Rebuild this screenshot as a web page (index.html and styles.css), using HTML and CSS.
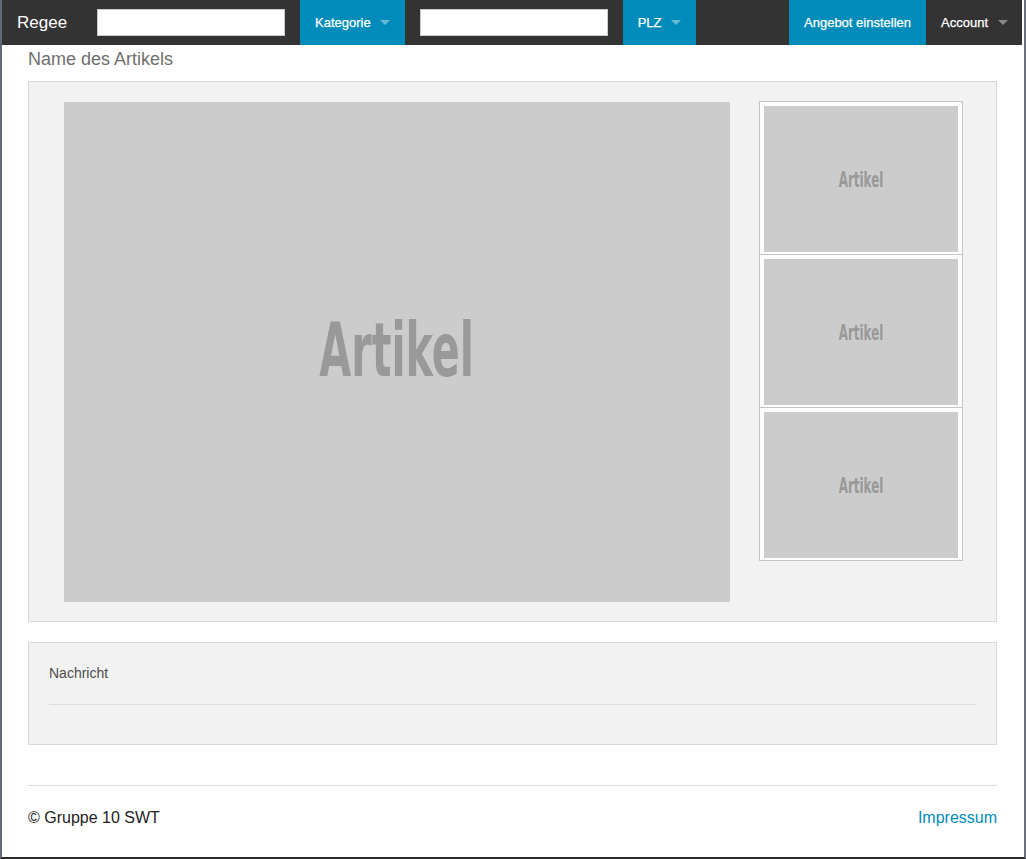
FILE: index.html
```html
<!DOCTYPE html>
<html lang="de">
<head>
<meta charset="utf-8">
<title>Regee</title>
<link rel="stylesheet" href="styles.css">
</head>
<body>
<div class="frame">
  <header class="topbar">
    <div class="brand">Regee</div>
    <input class="search" type="text">
    <a class="nav-btn blue dropdown">Kategorie</a>
    <input class="search" type="text">
    <a class="nav-btn blue dropdown">PLZ</a>
    <div class="spacer"></div>
    <a class="nav-btn blue">Angebot einstellen</a>
    <a class="nav-btn dropdown gray-arrow">Account</a>
  </header>
  <main class="content">
    <h1 class="title">Name des Artikels</h1>
    <section class="panel gallery">
      <div class="main-img"><span class="ph ph-big">Artikel</span></div>
      <div class="thumbs">
        <div class="thumb"><div class="thumb-img"><span class="ph ph-small">Artikel</span></div></div>
        <div class="thumb"><div class="thumb-img"><span class="ph ph-small">Artikel</span></div></div>
        <div class="thumb"><div class="thumb-img"><span class="ph ph-small">Artikel</span></div></div>
      </div>
    </section>
    <section class="panel message">
      <p class="msg-label">Nachricht</p>
      <hr class="msg-rule">
    </section>
    <footer class="footer">
      <span class="copy">© Gruppe 10 SWT</span>
      <a class="imprint">Impressum</a>
    </footer>
  </main>
</div>
</body>
</html>
```

FILE: styles.css
```css
* { box-sizing: border-box; }
html, body { margin: 0; padding: 0; background: #fff; }
body { font-family: "Liberation Sans", Arial, sans-serif; }

.frame {
  width: 1026px;
  height: 859px;
  border-left: 2px solid #5f6977;
  border-right: 2px solid #6d727a;
  border-bottom: 2px solid #2a2a2a;
  padding-right: 2px;
  overflow: hidden;
}

.topbar {
  height: 45px;
  background: #333;
  display: flex;
  align-items: center;
}
.brand {
  color: #fff;
  font-size: 17px;
  padding-left: 15px;
  width: 95px;
}
.search {
  width: 188px;
  height: 27px;
  border: 1px solid #ccc;
  background: #fff;
  margin: 0 15px 0 0;
  padding: 0;
  outline: none;
}
.nav-btn {
  height: 45px;
  line-height: 45px;
  padding: 0 15px;
  color: #fff;
  font-size: 13px;
  font-weight: normal;
  position: relative;
  text-decoration: none;
  -webkit-text-stroke: 0.25px #fff;
}
.blue { background: #008cba; }
.topbar .blue.dropdown { margin-right: 15px; }
.dropdown { padding-right: 34px; }
.dropdown::after {
  content: "";
  position: absolute;
  right: 15px;
  top: 20px;
  border: 5px solid transparent;
  border-top-color: rgba(255,255,255,0.4);
}
.gray-arrow::after { border-top-color: #888; right: 14px; }
.spacer { flex: 1; }

.content {
  padding: 0 25px 0 26px;
}
.title {
  margin: 2px 0 10px;
  font-size: 18px;
  font-weight: normal;
  line-height: 24px;
  color: #6f6f6f;
}
.panel {
  background: #f2f2f2;
  border: 1px solid #d8d8d8;
}
.gallery {
  display: flex;
  align-items: flex-start;
  padding: 20px 0 19px 35px;
  gap: 29px;
}
.main-img {
  width: 666px;
  height: 500px;
  background: #ccc;
  display: flex;
  align-items: center;
  justify-content: center;
}
.ph {
  font-family: "DejaVu Sans Condensed", "DejaVu Sans", sans-serif;
  font-weight: bold;
  color: #999;
  display: inline-block;
}
.ph-big {
  font-size: 74px;
  transform: scaleX(0.62);
  margin-top: -4px;
}
.ph-small {
  font-size: 22px;
  transform: scaleX(0.6);
}
.thumbs {
  display: flex;
  flex-direction: column;
  margin-top: -1px;
}
.thumb {
  border: 1px solid #c4c4c4;
  background: #fff;
  padding: 4px 4px 2px;
  margin-bottom: -1px;
}
.thumb-img {
  width: 194px;
  height: 146px;
  background: #ccc;
  display: flex;
  align-items: center;
  justify-content: center;
}

.message {
  margin-top: 20px;
  padding: 20px 20px 20px;
}
.msg-label {
  margin: 0;
  font-size: 14px;
  line-height: 20px;
  color: #4d4d4d;
}
.msg-rule {
  margin: 21px 0 19px;
  border: 0;
  border-top: 1px solid #ddd;
  height: 0;
}
.footer {
  margin-top: 40px;
  border-top: 1px solid #ddd;
  padding-top: 20px;
  display: flex;
  justify-content: space-between;
  font-size: 16px;
  line-height: 24px;
}
.copy { color: #222; }
.imprint { color: #008cba; text-decoration: none; }
```
